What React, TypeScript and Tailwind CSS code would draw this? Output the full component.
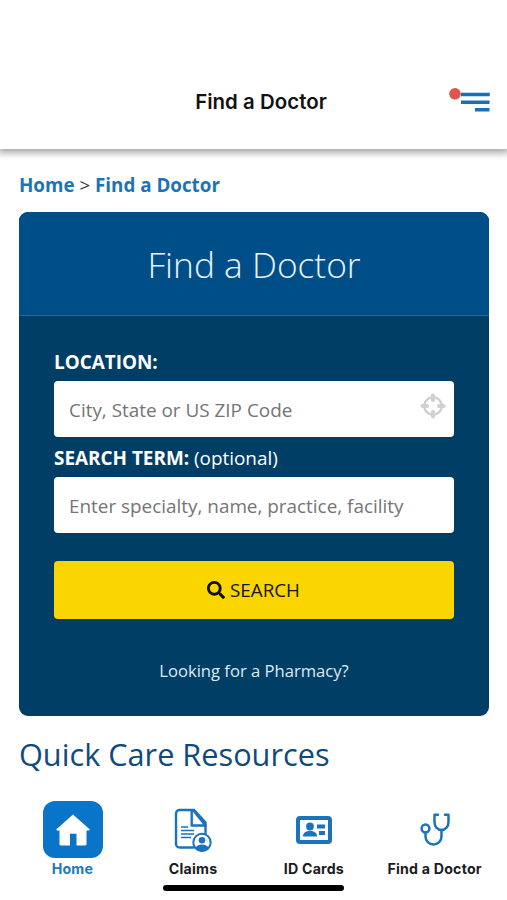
import { FaSearch } from "react-icons/fa";
import clsx from "clsx";
import type { ReactNode } from "react";

interface Tab {
  label: string;
  icon: ReactNode;
  active?: boolean;
}

function MenuIcon() {
  return (
    <svg width="42" height="28" viewBox="0 0 42 28">
      <path d="M13 6.500h28.800M13 14.200h28.500M27 21.700h14.500" stroke="#1a70b5" strokeWidth="3.500" />
      <circle cx="7" cy="5.800" r="5.800" fill="#e0564e" />
    </svg>
  );
}

function CrosshairIcon() {
  return (
    <svg width="26" height="26" viewBox="0 0 26 26" fill="none" stroke="#d0d0d0">
      <circle cx="13" cy="13" r="8.800" strokeWidth="2.400" />
      <path
        d="M13 2.500v4.500M13 19v4.500M2.500 13H7M19 13h4.500"
        strokeWidth="4.200"
        strokeLinecap="round"
      />
    </svg>
  );
}

function HomeIcon() {
  return (
    <svg width="34" height="32" viewBox="0 0 34 32" fill="#fff">
      <path d="M17 0.500 0.700 15c-.6.6-.4 1.500.5 1.500H3.500V30.200c0 .7.5 1.200 1.200 1.200H14V19.700h6.500v11.700h8.800c.7 0 1.200-.5 1.200-1.200V16.500h2.300c.9 0 1.100-.9.500-1.500z" />
    </svg>
  );
}

function ClaimsIcon() {
  return (
    <svg width="38" height="46" viewBox="0 0 38 46" fill="none" stroke="#1a73bd" strokeWidth="2.400">
      <path d="M20.500 40.500H5.500A3.500 3.500 0 0 1 2 37V6.500A3.500 3.500 0 0 1 5.500 3H20L31.500 15.500V28" />
      <path d="M17.700 3V18.500H31.500L19.500 3.500" strokeLinejoin="round" />
      <path d="M7 20h7M7 23.500h13M7 27h13M7 30.500h10" strokeWidth="1.600" />
      <circle cx="28" cy="35.500" r="8.700" fill="#fff" strokeWidth="2" />
      <circle cx="28" cy="33.300" r="3.300" fill="#1a73bd" stroke="none" />
      <path d="M21.500 41.500c1-3 3-4 6.500-4s5.500 1 6.500 4a9 9 0 0 1-13 0z" fill="#1a73bd" stroke="none" />
    </svg>
  );
}

function IdCardIcon() {
  return (
    <svg width="36" height="28" viewBox="0 0 36 28" fill="#1a73bd">
      <rect x="2" y="2" width="32" height="24" rx="2" fill="none" stroke="#1a73bd" strokeWidth="4" />
      <circle cx="14" cy="10.500" r="3.900" />
      <path d="M7 20.500c0-4 3-5.500 7-5.500s7 1.500 7 5.500z" />
      <path d="M21 8.500h8v4h-8zM23 15h6v4h-6z" />
    </svg>
  );
}

function StethoscopeIcon() {
  return (
    <svg
      width="30"
      height="34"
      viewBox="0 0 30 34"
      fill="none"
      stroke="#1a73bd"
      strokeWidth="2.500"
      strokeLinecap="round"
    >
      <circle cx="5.500" cy="15.500" r="3.900" />
      <path d="M5.500 19.500V23.500a8 8 0 0 0 16 0V17" />
      <path d="M18 1.800H14.500V9c0 4.500 3 8 7 8s7-3.500 7-8V1.800H25" strokeLinejoin="round" />
    </svg>
  );
}

const tabs: Tab[] = [
  { label: "Home", icon: <HomeIcon />, active: true },
  { label: "Claims", icon: <ClaimsIcon /> },
  { label: "ID Cards", icon: <IdCardIcon /> },
  { label: "Find a Doctor", icon: <StethoscopeIcon /> },
];

function Header() {
  return (
    <header className="relative z-10 grid h-[149px] shrink-0 grid-cols-[1fr_auto_1fr] items-center bg-white pt-[54px] shadow-[0_2px_7px_2px_rgba(0,0,0,0.35)]">
      <span />
      <h1 className="pl-[15px] font-['Inter'] text-[20.4px] leading-7 font-semibold tracking-[0.05px] text-[#111]">
        Find a Doctor
      </h1>
      <button className="mr-[17px] justify-self-end">
        <MenuIcon />
      </button>
    </header>
  );
}

function SearchCard() {
  return (
    <section className="mt-[13px] flex h-[504px] flex-col overflow-hidden rounded-[9px] bg-[#003e66] text-white">
      <h2 className="flex h-[104px] shrink-0 items-center justify-center border-b border-[#2d6691] bg-[#004e87] pt-[2px] text-[35.3px] font-light text-[#e6f4ff]">
        Find a Doctor
      </h2>
      <div className="flex flex-col px-[35px] pt-[32px]">
        <label className="h-[33px] text-[18.9px] leading-7 font-bold">LOCATION:</label>
        <div className="flex h-[56px] items-center justify-between rounded-[4px] bg-white pr-[8px] pl-[15px]">
          <span className="pt-[2px] text-[18.9px] text-[#757575]">City, State or US ZIP Code</span>
          <span className="pb-[6px]">
            <CrosshairIcon />
          </span>
        </div>
        <label className="h-[40px] pt-[7px] text-[18.9px] leading-[29px]">
          <b>SEARCH TERM:</b> (optional)
        </label>
        <div className="flex h-[56px] items-center rounded-[4px] bg-white pl-[15px]">
          <span className="pt-[2px] text-[18.9px] text-[#757575]">
            Enter specialty, name, practice, facility
          </span>
        </div>
        <button className="mt-[28px] flex h-[58px] items-center justify-center gap-[5px] rounded-[4px] bg-[#fad500] pr-px text-[18.8px] text-[#16160f]">
          <FaSearch size={18} color="#111" />
          <span>SEARCH</span>
        </button>
        <a className="mt-[38px] text-center text-[16.6px] leading-[27px] text-[#dcebf5]">
          Looking for a Pharmacy?
        </a>
      </div>
    </section>
  );
}

function TabBar() {
  return (
    <nav className="mt-auto h-[105px] bg-white pt-[6px] pr-3 pl-3">
      <div className="grid grid-cols-4">
        {tabs.map((tab) => (
          <div key={tab.label} className="flex flex-col items-center">
            <div
              className={clsx(
                "flex h-[57px] w-[60px] items-center justify-center rounded-[12px]",
                tab.active && "ml-px bg-[#0a74c9]"
              )}
            >
              {tab.icon}
            </div>
            <span
              className={clsx(
                "mt-[1px] font-['Inter'] text-[14.2px] leading-5 font-bold tracking-[0.2px] whitespace-nowrap",
                tab.active ? "text-[#2077bb]" : "text-[#1c1c1e]"
              )}
            >
              {tab.label}
            </span>
          </div>
        ))}
      </div>
      <div className="mx-auto mt-[6px] h-[6px] w-[181px] rounded-full bg-black" />
    </nav>
  );
}

export default function App() {
  return (
    <div className="flex h-[900px] w-[507px] flex-col overflow-hidden bg-white font-['Open_Sans',sans-serif]">
      <Header />
      <main className="pr-[18px] pl-[19px]">
        <p className="pt-[22px] text-[18.8px] leading-7 font-bold text-[#1b73b9]">
          Home <span className="font-normal text-[#333]">&gt;</span> Find a Doctor
        </p>
        <SearchCard />
        <h2 className="mt-[16px] text-[30.7px] leading-[44px] text-[#0f4a7d]">
          Quick Care Resources
        </h2>
      </main>
      <TabBar />
    </div>
  );
}
